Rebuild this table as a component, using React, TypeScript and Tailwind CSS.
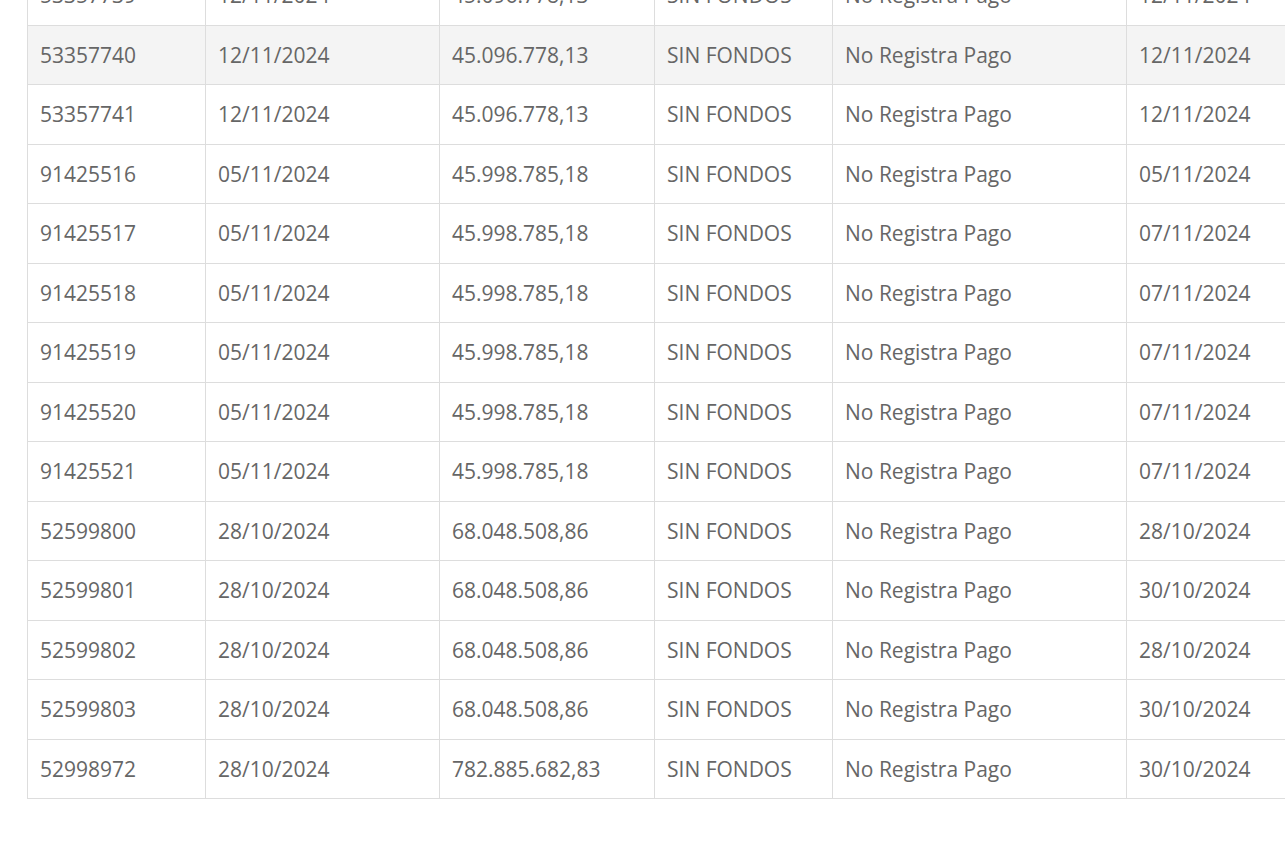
import React from 'react';

interface Row {
  id: string;
  fecha: string;
  monto: string;
  motivo: string;
  estado: string;
  fechaPago: string;
}

const rows: Row[] = [
  { id: '53357739', fecha: '12/11/2024', monto: '45.096.778,13', motivo: 'SIN FONDOS', estado: 'No Registra Pago', fechaPago: '12/11/2024' },
  { id: '53357740', fecha: '12/11/2024', monto: '45.096.778,13', motivo: 'SIN FONDOS', estado: 'No Registra Pago', fechaPago: '12/11/2024' },
  { id: '53357741', fecha: '12/11/2024', monto: '45.096.778,13', motivo: 'SIN FONDOS', estado: 'No Registra Pago', fechaPago: '12/11/2024' },
  { id: '91425516', fecha: '05/11/2024', monto: '45.998.785,18', motivo: 'SIN FONDOS', estado: 'No Registra Pago', fechaPago: '05/11/2024' },
  { id: '91425517', fecha: '05/11/2024', monto: '45.998.785,18', motivo: 'SIN FONDOS', estado: 'No Registra Pago', fechaPago: '07/11/2024' },
  { id: '91425518', fecha: '05/11/2024', monto: '45.998.785,18', motivo: 'SIN FONDOS', estado: 'No Registra Pago', fechaPago: '07/11/2024' },
  { id: '91425519', fecha: '05/11/2024', monto: '45.998.785,18', motivo: 'SIN FONDOS', estado: 'No Registra Pago', fechaPago: '07/11/2024' },
  { id: '91425520', fecha: '05/11/2024', monto: '45.998.785,18', motivo: 'SIN FONDOS', estado: 'No Registra Pago', fechaPago: '07/11/2024' },
  { id: '91425521', fecha: '05/11/2024', monto: '45.998.785,18', motivo: 'SIN FONDOS', estado: 'No Registra Pago', fechaPago: '07/11/2024' },
  { id: '52599800', fecha: '28/10/2024', monto: '68.048.508,86', motivo: 'SIN FONDOS', estado: 'No Registra Pago', fechaPago: '28/10/2024' },
  { id: '52599801', fecha: '28/10/2024', monto: '68.048.508,86', motivo: 'SIN FONDOS', estado: 'No Registra Pago', fechaPago: '30/10/2024' },
  { id: '52599802', fecha: '28/10/2024', monto: '68.048.508,86', motivo: 'SIN FONDOS', estado: 'No Registra Pago', fechaPago: '28/10/2024' },
  { id: '52599803', fecha: '28/10/2024', monto: '68.048.508,86', motivo: 'SIN FONDOS', estado: 'No Registra Pago', fechaPago: '30/10/2024' },
  { id: '52998972', fecha: '28/10/2024', monto: '782.885.682,83', motivo: 'SIN FONDOS', estado: 'No Registra Pago', fechaPago: '30/10/2024' },
];

const cell = 'h-[59.5px] border border-[#dddddd] px-[12px] align-middle whitespace-nowrap';

export default function App() {
  return (
    <div className="w-[1285px] h-[852px] overflow-hidden bg-white">
      {/* scrolled view: the first row sits partly above the top edge */}
      <div className="ml-[27px] mt-[-35px]">
        <table
          className="border-collapse table-fixed w-[1310px] text-[21px] leading-[28px] text-[#666666]"
          style={{ fontFamily: '"Open Sans", "Noto Sans", sans-serif' }}
        >
          <colgroup>
            <col className="w-[178px]" />
            <col className="w-[234px]" />
            <col className="w-[215px]" />
            <col className="w-[178px]" />
            <col className="w-[294px]" />
            <col className="w-[211px]" />
          </colgroup>
          <tbody>
            {rows.map((r, i) => (
              <tr key={r.id} className={i === 1 ? 'bg-[#f4f4f4]' : 'bg-white'}>
                <td className={cell}>{r.id}</td>
                <td className={cell}>{r.fecha}</td>
                <td className={cell}>{r.monto}</td>
                <td className={cell}>{r.motivo}</td>
                <td className={cell}>{r.estado}</td>
                <td className={cell}>{r.fechaPago}</td>
              </tr>
            ))}
          </tbody>
        </table>
      </div>
    </div>
  );
}
